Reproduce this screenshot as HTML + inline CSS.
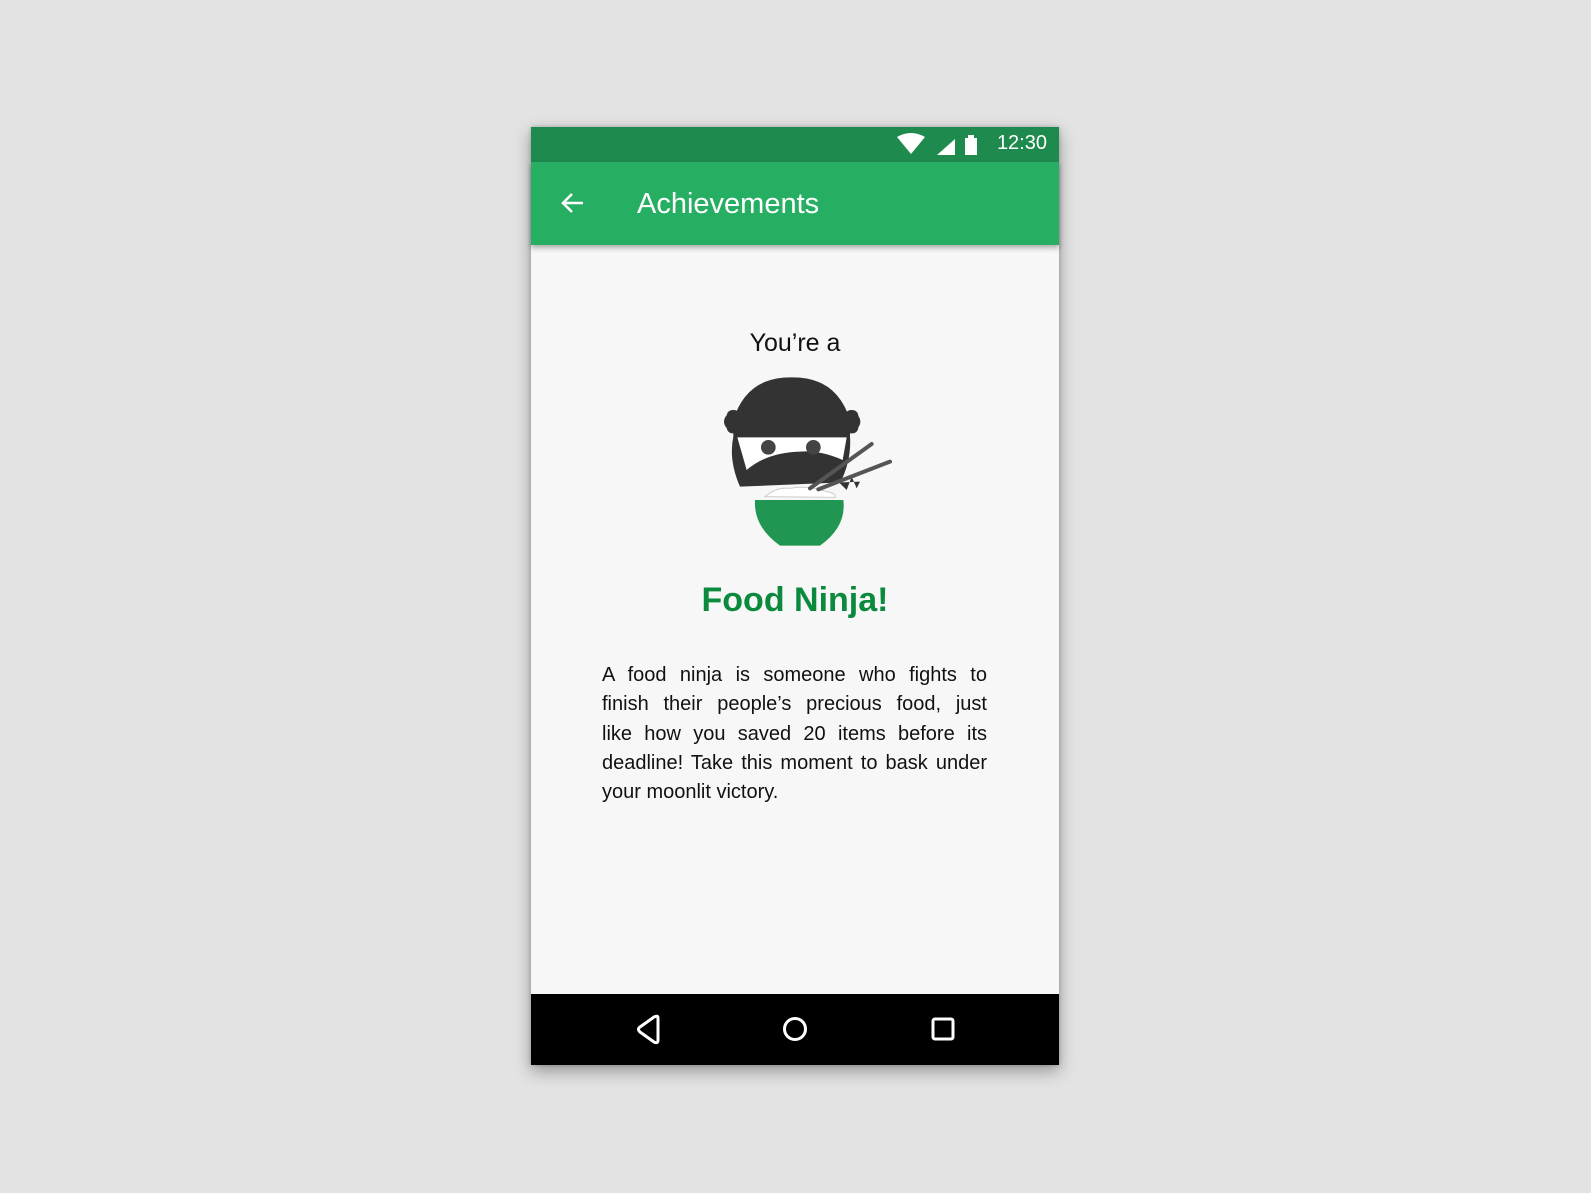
<!DOCTYPE html>
<html><head><meta charset="utf-8"><style>
html,body{margin:0;padding:0;width:1591px;height:1193px;overflow:hidden;background:#e3e3e3;font-family:"Liberation Sans",Arial,sans-serif}
.phone{position:absolute;left:531px;top:127px;width:528px;height:938px;background:#f7f7f7;box-shadow:0 6px 16px rgba(0,0,0,.35),0 0 4px rgba(0,0,0,.2)}
.status{position:absolute;left:0;top:0;width:528px;height:35px;background:#1f8a4d}
.bar{position:absolute;left:0;top:35px;width:528px;height:83px;background:#26ae62;box-shadow:0 3px 5px rgba(0,0,0,.3)}
.title{position:absolute;left:106px;top:26px;color:#fff;font-size:29px;font-weight:normal}
.time{position:absolute;right:12px;top:5px;color:#fff;font-size:20px}
.nav{position:absolute;left:0;top:867px;width:528px;height:71px;background:#000}
.t{position:absolute;left:0;width:528px;text-align:center}
.p{position:absolute;left:71px;top:534px;width:385px;font-size:20px;line-height:29.3px;color:#111}
.p div{text-align:justify;text-align-last:justify}
.p div.l{text-align-last:left}
</style></head><body>
<div class="phone">
 <div class="status">
  <svg style="position:absolute;left:366px;top:6px" width="100" height="24">
   <path d="M0 4 Q14 -4 28 4 L14 21 Z" fill="#fff"/>
   <path d="M40 22 L58 6 L58 22 Z" fill="#fff"/>
   <rect x="68" y="5" width="12" height="17" fill="#fff"/><rect x="71" y="2" width="6" height="4" fill="#fff"/>
  </svg>
  <div class="time">12:30</div>
 </div>
 <div class="bar">
  <svg style="position:absolute;left:28px;top:28px" width="30" height="26"><path d="M24 13 H4 M13 4 L4 13 L13 22" stroke="#fff" stroke-width="2.6" fill="none"/></svg>
  <div class="title">Achievements</div>
 </div>
 <div class="t" style="top:202px;font-size:25px;color:#111">You’re a</div>
 <svg style="position:absolute;left:169px;top:233px" width="200" height="200" viewBox="0 0 600 600">
  <path d="M120 380 Q85 300 100 230 L100 180 Q140 50 275 52 Q410 50 450 180 L450 230 Q455 300 420 370 L440 390 L455 350 L470 385 L480 365 Z" fill="#333"/>
  <circle cx="98" cy="185" r="26" fill="#333"/><circle cx="455" cy="185" r="26" fill="#333"/>
  <rect x="80" y="150" width="40" height="70" rx="18" fill="#333"/><rect x="435" y="150" width="40" height="70" rx="18" fill="#333"/>
  <path d="M112 232 L440 232 L428 300 Q360 270 300 275 Q200 278 140 330 Z" fill="#fff"/>
  <circle cx="205" cy="262" r="22" fill="#444"/><circle cx="340" cy="262" r="22" fill="#444"/>
  <path d="M195 410 Q230 380 270 385 Q320 375 380 395 Q410 400 405 412 Z" fill="#fff" stroke="#ccc" stroke-width="3"/>
  <path d="M330 385 L515 252" stroke="#555" stroke-width="12" stroke-linecap="round"/>
  <path d="M355 388 L570 305" stroke="#555" stroke-width="12" stroke-linecap="round"/>
  <path d="M165 420 L430 420 Q440 500 360 557 L240 557 Q160 500 165 420 Z" fill="#219653"/>
 </svg>
 <div class="t" style="top:454px;font-size:34px;font-weight:bold;color:#0b8a3e">Food Ninja!</div>
 <div class="p">
  <div>A food ninja is someone who fights to</div>
  <div>finish their people’s precious food, just</div>
  <div>like how you saved 20 items before its</div>
  <div>deadline! Take this moment to bask under</div>
  <div class="l">your moonlit victory.</div>
 </div>
 <div class="nav">
  <svg width="528" height="71">
   <path d="M127 24 L127 46 Q127 50 123 48 L109 38 Q106 35 109 33 L123 23 Q127 21 127 24 Z" fill="none" stroke="#fff" stroke-width="3" stroke-linejoin="round"/>
   <circle cx="264" cy="35" r="10.5" fill="none" stroke="#fff" stroke-width="3"/>
   <rect x="402" y="25" width="20" height="20" rx="2" fill="none" stroke="#fff" stroke-width="3"/>
  </svg>
 </div>
</div>
</body></html>
